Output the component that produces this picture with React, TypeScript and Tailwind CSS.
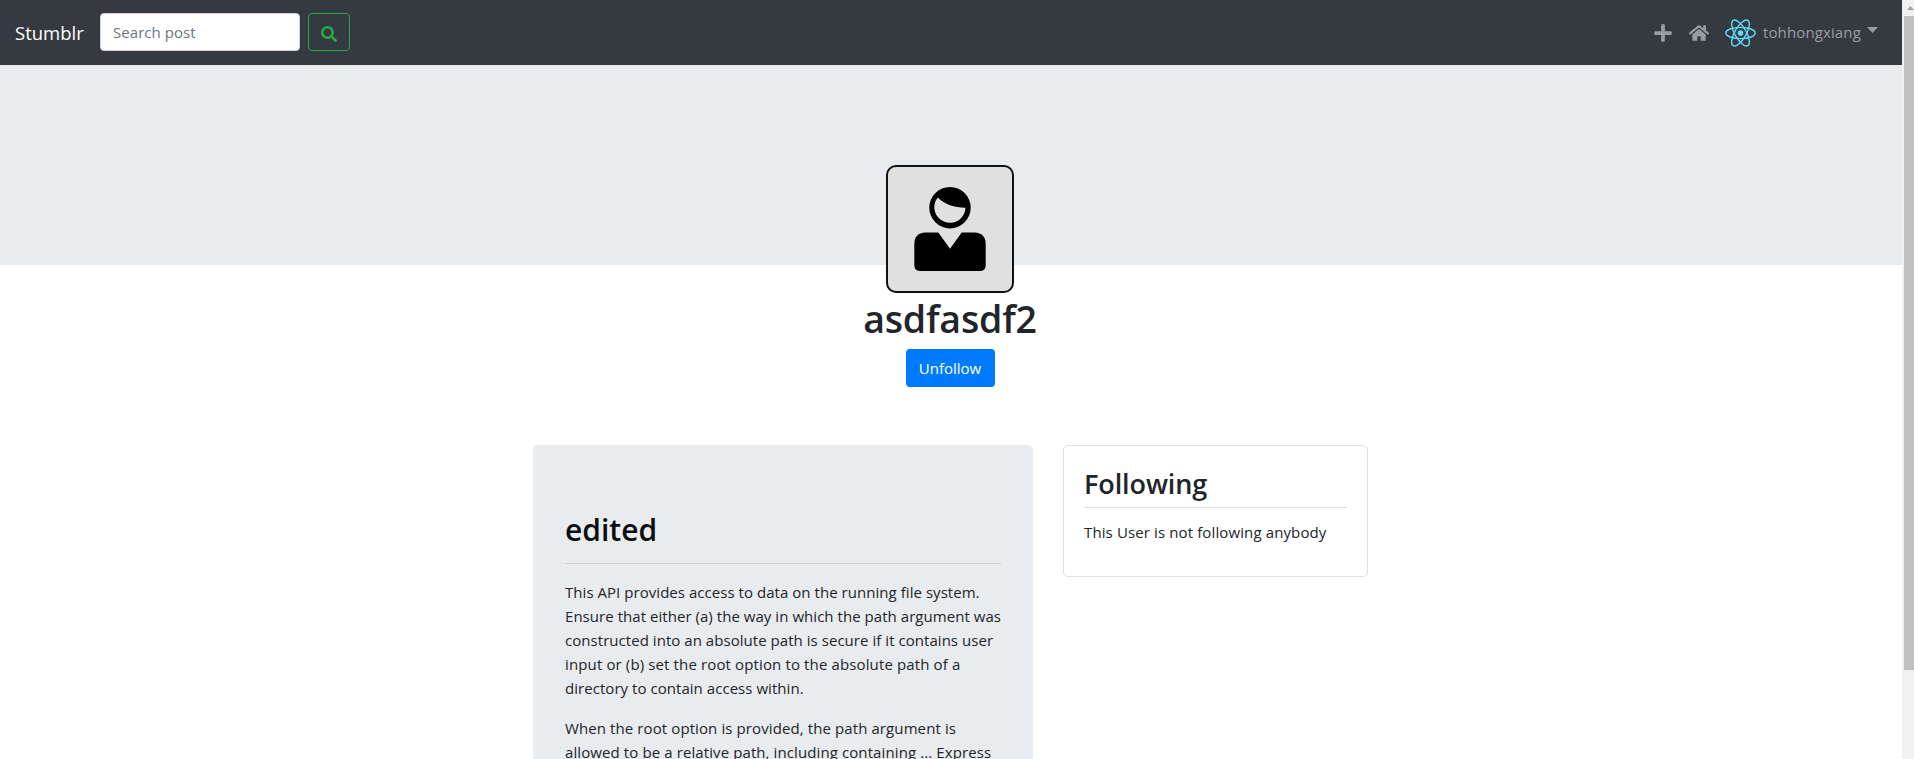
import React from "react";
import { FaHome, FaPlus, FaSearch } from "react-icons/fa";

function ReactLogo() {
  return (
    <svg className="h-[28px] w-[31px]" viewBox="-11.5 -10.3 23 20.6" fill="none">
      <circle r="2.1" fill="#61dafb" />
      <g stroke="#61dafb" strokeWidth="1.05">
        <ellipse rx="10.9" ry="4.2" />
        <ellipse rx="10.9" ry="4.2" transform="rotate(60)" />
        <ellipse rx="10.9" ry="4.2" transform="rotate(120)" />
      </g>
    </svg>
  );
}

function Navbar() {
  return (
    <nav className="flex h-[65px] items-center bg-[#343a40] pl-[15px] pr-[24px]">
      <a className="w-[85px] whitespace-nowrap text-[18.5px] leading-[30px] text-white">Stumblr</a>
      <input
        placeholder="Search post"
        className="mb-px h-[38px] w-[200px] rounded-[4px] border border-[#ced4da] bg-white px-[12px] text-[15px] tracking-[0.05px] placeholder:text-[#6c757d]"
      />
      <button className="mb-px ml-2 flex h-[38px] w-[42px] items-center justify-center rounded-[4px] border border-[#28a745] text-[#28a745]">
        <FaSearch size={16} className="mt-[3px]" />
      </button>
      <div className="ml-auto flex items-center text-[#9a9da0]">
        <FaPlus size={20} />
        <FaHome size={20} className="ml-4" />
        <span className="ml-[16px]">
          <ReactLogo />
        </span>
        <span className="mb-px ml-[7px] w-[98px] whitespace-nowrap text-[15px] leading-6 tracking-[0.12px]">tohhongxiang</span>
        <svg className="mb-[6px] ml-[6px] h-[6px] w-[11px]" viewBox="0 0 11 6" fill="currentColor">
          <path d="M0 0h11L5.5 6z" />
        </svg>
      </div>
    </nav>
  );
}

function Avatar() {
  return (
    <div className="h-[128px] w-[128px] overflow-hidden rounded-[10px] border-2 border-[#111] bg-[#e0e0e0]">
      <svg className="h-full w-full" viewBox="0 0 124 124">
        <circle cx="62" cy="40.7" r="20.7" />
        <path d="M49.700 30.500C57 37.500 66 40.600 77.500 40.700A15.600 15.600 0 1 1 49.700 30.500z" fill="#e0e0e0" />
        <path d="M37.500 65.500H50.300L62 81.700L73.700 65.500H86.500Q97.700 66 97.700 77V98Q97.700 104 91.700 104H32.300Q26.300 104 26.300 98V77Q26.300 66 37.500 65.500z" />
      </svg>
    </div>
  );
}

function PostCard() {
  return (
    <article className="w-[500px] shrink-0 rounded-[5px] bg-[#e9ecef] px-[32px] pb-[64px] pt-[66px]">
      <h2 className="whitespace-nowrap text-[30px] font-semibold leading-[38px] text-[#0c0f12]">edited</h2>
      <hr className="mb-4 mt-[14px] border-[#cfd2d5]" />
      <div className="whitespace-nowrap text-[15px] leading-6 tracking-[0.045px]">
        <p className="mb-4">
          This API provides access to data on the running file system.
          <br />
          Ensure that either (a) the way in which the path argument was
          <br />
          constructed into an absolute path is secure if it contains user
          <br />
          <span className="tracking-[0.13px]">input or (b) set the root option to the absolute path of a</span>
          <br />
          directory to contain access within.
        </p>
        <p className="tracking-[0.1px]">
          When the root option is provided, the path argument is
          <br />
          allowed to be a relative path, including containing ... Express
        </p>
      </div>
    </article>
  );
}

function FollowingCard() {
  return (
    <aside className="h-[132px] w-[305px] shrink-0 rounded-[5px] border border-[#dfdfdf] bg-white px-[20px] pt-[21px]">
      <h3 className="whitespace-nowrap text-[27px] font-semibold leading-[34px] tracking-[-0.1px]">Following</h3>
      <hr className="mb-[12px] mt-[6px] border-[#dfdfdf]" />
      <p className="whitespace-nowrap text-[15px] leading-6 tracking-[0.12px]">This User is not following anybody</p>
    </aside>
  );
}

function Scrollbar() {
  return (
    <div className="flex w-[12px] shrink-0 flex-col bg-[#f1f1f1] pl-[2px]">
      <div className="flex h-[16px] shrink-0 items-center pl-[3px]">
        <svg className="h-[4px] w-[7px]" viewBox="0 0 7 4" fill="#a3a3a3">
          <path d="M3.500 0L7 4H0z" />
        </svg>
      </div>
      <div className="h-[654px] bg-[#c1c1c1]" />
    </div>
  );
}

export default function App() {
  return (
    <div className="flex h-[759px] w-[1914px] overflow-hidden bg-white font-['Open_Sans','Noto_Sans',sans-serif] text-[#212529]">
      <div className="w-[1902px] shrink-0">
        <Navbar />
        <div className="h-[200px] bg-[#e9ecef]" />
        <header className="-mt-[100px] flex flex-col items-center pr-[2px]">
          <Avatar />
          <h1 className="mt-[2px] whitespace-nowrap text-[37.5px] font-semibold leading-[48px] tracking-[-0.2px]">asdfasdf2</h1>
          <button className="mt-[6px] h-[38px] w-[89px] rounded-[4px] bg-[#007bff] text-[15px] text-white">
            Unfollow
          </button>
        </header>
        <main className="mt-[58px] flex items-start gap-[30px] pl-[533px]">
          <PostCard />
          <FollowingCard />
        </main>
      </div>
      <Scrollbar />
    </div>
  );
}
